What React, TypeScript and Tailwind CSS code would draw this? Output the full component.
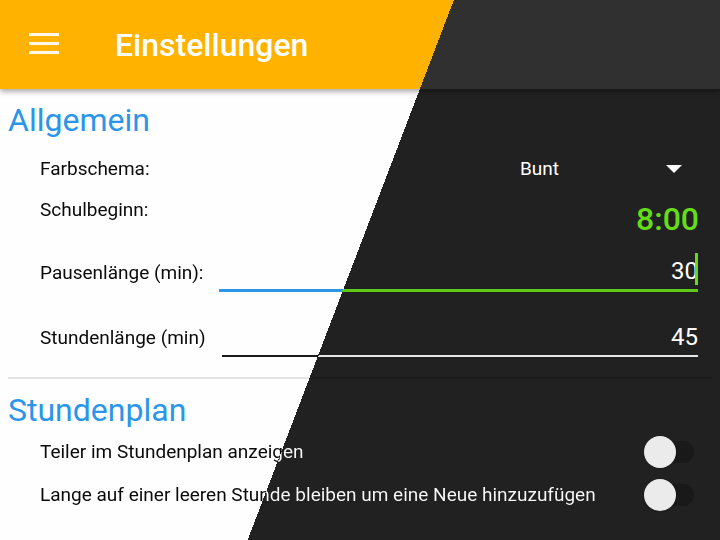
import { useState, type ReactNode } from "react";

// Each surface and each piece of text that can meet the diagonal paints the
// same viewport-fixed gradient, so the light and dark halves always line up.

function SplitText({ children }: { children: ReactNode }) {
  return (
    <span className="bg-[linear-gradient(110.9deg,#0a0a0a_49%,#fafafa_49%)] bg-fixed bg-clip-text text-transparent">
      {children}
    </span>
  );
}

function SectionTitle({ children }: { children: ReactNode }) {
  return <h2 className="px-2 text-[32px] leading-10 text-[#2b95e9]">{children}</h2>;
}

function NumberRow({ id, label, value, onChange, active }: {
  id: string;
  label: string;
  value: string;
  onChange: (value: string) => void;
  active?: boolean;
}) {
  return (
    <div className="flex h-[65px] items-center gap-4 pr-[22px] pl-10">
      <label htmlFor={id} className="shrink-0 text-[19px] leading-6">
        <SplitText>{label}</SplitText>
      </label>
      <div className="min-w-0 flex-1">
        <div className="flex h-9 items-center">
          <input
            id={id}
            inputMode="numeric"
            value={value}
            onChange={(e) => onChange(e.target.value)}
            className="h-8 w-full min-w-0 bg-transparent text-right text-2xl text-white caret-[#64dd17] outline-none"
          />
          {active && <span className="-ml-[3px] h-8 w-[3px] shrink-0 self-start bg-[#64dd17]" />}
        </div>
        {active ? (
          <div className="h-[3px] bg-[linear-gradient(110.9deg,#2b95e9_49%,#5fca17_49%)] bg-fixed" />
        ) : (
          <div className="h-[2px] bg-[linear-gradient(110.9deg,#1a1a1a_49%,#e6e6e6_49%)] bg-fixed" />
        )}
      </div>
    </div>
  );
}

function SwitchRow({ id, label }: { id: string; label: string }) {
  return (
    <div className="flex h-[43px] items-center justify-between pr-[26px] pl-10">
      <label htmlFor={id} className="text-[19px] leading-6">
        <SplitText>{label}</SplitText>
      </label>
      <input
        id={id}
        type="checkbox"
        role="switch"
        className="flex h-[22px] w-[50px] appearance-none items-center rounded-full bg-[#191919] before:size-8 before:shrink-0 before:rounded-full before:bg-[#ebebeb] before:shadow-sm checked:justify-end"
      />
    </div>
  );
}

export default function App() {
  const [pause, setPause] = useState("30");
  const [lesson, setLesson] = useState("45");

  return (
    <div className="flex h-screen flex-col overflow-hidden bg-[linear-gradient(110.9deg,#fefefe_49%,#212121_49%)] bg-fixed font-[Roboto,sans-serif]">
      <header className="z-10 flex h-[89px] shrink-0 items-center gap-14 bg-[linear-gradient(110.9deg,#ffb300_49%,#303030_49%)] bg-fixed px-[29px] shadow-[0_2px_6px_rgba(0,0,0,0.4)]">
        <button type="button" aria-label="Menü" className="flex w-[30px] flex-col gap-1.5 pb-0.5">
          <span className="h-[3px] w-full bg-[#fff8e8]" />
          <span className="h-[3px] w-full bg-[#fff8e8]" />
          <span className="h-[3px] w-full bg-[#fff8e8]" />
        </button>
        <h1 className="text-[32px] leading-10 font-medium text-white">Einstellungen</h1>
      </header>

      <main>
        <section className="pt-[11px] pb-[7px]">
          <SectionTitle>Allgemein</SectionTitle>
          <div className="flex h-[58px] items-center justify-between pr-[38px] pl-10">
            <label htmlFor="scheme" className="text-[19px] leading-6">
              <SplitText>Farbschema:</SplitText>
            </label>
            <div className="grid w-[162px] items-center">
              <select
                id="scheme"
                className="col-start-1 row-start-1 w-full appearance-none bg-transparent text-[19px] leading-6 text-white"
              >
                <option>Bunt</option>
              </select>
              <svg viewBox="0 0 16 8" className="pointer-events-none col-start-1 row-start-1 h-2 w-4 justify-self-end fill-white">
                <path d="M0 0h16L8 8z" />
              </svg>
            </div>
          </div>
          <div className="flex h-[42px] justify-between pr-[21px] pl-10">
            <span className="text-[19px] leading-6">
              <SplitText>Schulbeginn:</SplitText>
            </span>
            <button type="button" className="h-[42px] text-[32px] leading-[42px] font-medium text-[#64dd17]">
              8:00
            </button>
          </div>
          <NumberRow id="pause" label="Pausenlänge (min):" value={pause} onChange={setPause} active />
          <NumberRow id="lesson" label="Stundenlänge (min)" value={lesson} onChange={setLesson} />
        </section>

        <hr className="mx-2 border-t-2 border-black/10" />

        <section className="pt-[11px]">
          <SectionTitle>Stundenplan</SectionTitle>
          <SwitchRow id="divider" label="Teiler im Stundenplan anzeigen" />
          <SwitchRow id="hold" label="Lange auf einer leeren Stunde bleiben um eine Neue hinzuzufügen" />
        </section>
      </main>
    </div>
  );
}
